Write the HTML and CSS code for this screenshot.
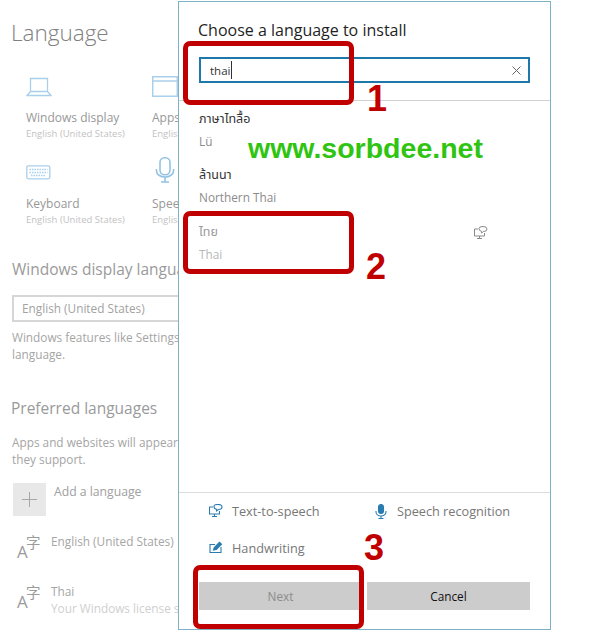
FILE: index.html
```html
<!DOCTYPE html>
<html lang="en">
<head>
<meta charset="utf-8">
<title>Language</title>
<link rel="stylesheet" href="styles.css">
</head>
<body>
<main class="page">
  <h1 class="page-title">Language</h1>
  <section class="tiles">
    <div class="tile">
      <svg class="tile-icon" width="26" height="20" viewBox="0 0 26 20"><path d="M4.500 1.500h17v13h-17zM1 18.500h24l-3.500-4h-17z"/></svg>
      <div class="tile-label">Windows display</div>
      <div class="tile-sub">English (United States)</div>
    </div>
    <div class="tile">
      <svg class="tile-icon" width="26" height="21" viewBox="0 0 26 21"><path d="M.7.700h24.600v19.600H.7zM.7 5h24.600" stroke-width="1.500"/></svg>
      <div class="tile-label window-label">Apps &amp; websites</div>
      <div class="tile-sub">English (United States)</div>
    </div>
    <div class="tile">
      <svg class="tile-icon" width="26" height="20" viewBox="0 0 26 20"><rect x=".8" y="2.800" width="23" height="13" rx="1.500"/><path class="keys" d="M3.500 6.500h18M3.500 9.500h18M5 12.500h15"/></svg>
      <div class="tile-label">Keyboard</div>
      <div class="tile-sub">English (United States)</div>
    </div>
    <div class="tile">
      <svg class="tile-icon tall" width="26" height="26" viewBox="0 0 26 26"><rect x="8" y=".8" width="10" height="17" rx="4.500"/><path d="M4.500 12v2a8.500 6 0 0 0 17 0v-2M13 20v5M9 25h8"/></svg>
      <div class="tile-label">Speech</div>
      <div class="tile-sub">English (United States)</div>
    </div>
  </section>

  <h2 class="section-title display-title">Windows display language</h2>
  <div class="select">English (United States)</div>
  <p class="note">Windows features like Settings and File Explorer will appear in this<br>language.</p>

  <h2 class="section-title preferred-title">Preferred languages</h2>
  <p class="note">Apps and websites will appear in the first language in the list that<br>they support.</p>

  <div class="add-row">
    <div class="add-box"><svg width="15" height="15" viewBox="0 0 15 15"><path d="M7.500 0v15M0 7.500h15"/></svg></div>
    <div class="add-label">Add a language</div>
  </div>
  <div class="lang-row first">
    <div class="lang-glyph"><span class="glyph-a">A</span><span class="glyph-zi">字</span></div>
    <div class="lang-text">
      <div>English (United States)</div>
    </div>
  </div>
  <div class="lang-row">
    <div class="lang-glyph"><span class="glyph-a">A</span><span class="glyph-zi">字</span></div>
    <div class="lang-text">
      <div>Thai</div>
      <div class="lang-sub">Your Windows license supports only one display language.</div>
    </div>
  </div>
</main>

<aside class="dialog">
  <div class="dialog-head">
    <h2 class="dialog-title">Choose a language to install</h2>
    <div class="search">
      <span class="search-text">thai</span><span class="caret"></span>
      <svg class="search-x" width="9" height="9" viewBox="0 0 9 9"><path d="M.5.500l8 8M8.500.500l-8 8"/></svg>
    </div>
  </div>
  <div class="results">
    <div class="result">
      <div class="native">ภาษาไทลื้อ</div>
      <div class="latin">Lü</div>
    </div>
    <div class="result">
      <div class="native">ล้านนา</div>
      <div class="latin">Northern Thai</div>
    </div>
    <div class="result selected">
      <div class="result-text">
        <div class="native">ไทย</div>
        <div class="latin">Thai</div>
      </div>
      <svg class="tts-mini" width="14" height="13" viewBox="0 0 14 13"><path d="M4 3H.5v7h10V7M5.500 10v2M3 12.500h5"/><path d="M5 2.500Q5 .5 9 .5t4 2.500-3.500 2.500L7.500 7V5.300Q5 5 5 2.500z"/></svg>
    </div>
  </div>
  <div class="features">
    <div class="feature">
      <svg width="14" height="13" viewBox="0 0 14 13"><path d="M4 3H.5v7h10V7M5.500 10v2M3 12.500h5"/><path d="M5 2.500Q5 .5 9 .5t4 2.500-3.500 2.500L7.500 7V5.300Q5 5 5 2.500z"/></svg>
      <span>Text-to-speech</span>
    </div>
    <div class="feature">
      <svg width="14" height="15" viewBox="0 0 14 15"><rect x="4.500" y=".5" width="5" height="9" rx="2.500" class="solid"/><path d="M2 7v1a5 4 0 0 0 10 0V7M7 12v2.500M4.500 14.500h5"/></svg>
      <span>Speech recognition</span>
    </div>
    <div class="feature">
      <svg width="14" height="13" viewBox="0 0 14 13"><path d="M6 3.500H1v8h11V6"/><path class="solid" d="M4.500 9l.8-2.500L10.500 1.300l2 2L7.300 8.400z"/></svg>
      <span>Handwriting</span>
    </div>
  </div>
  <div class="actions">
    <button class="btn disabled" type="button">Next</button>
    <button class="btn" type="button">Cancel</button>
  </div>
</aside>

<div class="mark box-1"></div>
<div class="mark box-2"></div>
<div class="mark box-3"></div>
<div class="num num-1">1</div>
<div class="num num-2">2</div>
<div class="num num-3">3</div>
<div class="watermark">www.sorbdee.net</div>
</body>
</html>
```

FILE: styles.css
```css
* { box-sizing: border-box; }
html, body { margin: 0; padding: 0; }
body {
  width: 600px;
  height: 634px;
  position: relative;
  overflow: hidden;
  background: #fff;
  font-family: "Open Sans", "Noto Sans", "Noto Sans Thai", "DejaVu Sans", sans-serif;
  color: #8c8c8c;
}

/* background settings page */
.page { height: 634px; padding: 17px 0 0 12px; overflow: hidden; white-space: nowrap; }
.page-title { margin: 0 0 0 -1px; font-size: 22.500px; line-height: 31px; font-weight: 300; color: #808080; }
.tiles { display: grid; grid-template-columns: 126px 126px; grid-auto-rows: 86px; margin: 29px 0 0 14px; }
.tile { display: flex; flex-direction: column; }
.tile-icon { height: 20px; flex: none; display: block; fill: none; stroke: #a9cfea; stroke-width: 1.300; }
.tile-icon.tall { height: 26px; margin-top: -6px; stroke: #93c2e4; stroke-width: 1.600; }
.tile-icon .keys { stroke-dasharray: 1.500 1; stroke-width: 1.400; }
.tile:nth-child(2) .tile-icon { height: 21px; margin: -1px 0 0; stroke-width: 1.500; }
.tile-label { margin-top: 12px; font-size: 12px; line-height: 17px; color: #989898; }
.tile-sub { font-size: 9.500px; line-height: 16px; color: #c2c2c2; }
.section-title { margin: 0; font-size: 15.500px; line-height: 22px; font-weight: 400; color: #9a9a9a; }
.display-title { margin-top: 9px; }
.select { width: 300px; height: 27px; margin-top: 15px; padding-left: 8px; border: 2px solid #d6d6d6; font-size: 11.800px; line-height: 23px; color: #a2a2a2; }
.note { margin: 7px 0 0; font-size: 11.800px; line-height: 17px; color: #a5a5a5; }
.preferred-title { margin: 34px 0 0 -1px; }
.preferred-title + .note { margin-top: 15px; }
.add-row { display: flex; gap: 8px; margin: 15px 0 0 1px; }
.add-box { width: 33px; height: 33px; display: flex; align-items: center; justify-content: center; background: #e8e8e8; }
.add-box svg { fill: none; stroke: #a8a8a8; }
.add-label { font-size: 12.200px; line-height: 17px; color: #a0a0a0; }
.lang-row { display: flex; margin-top: 16px; height: 34px; }
.lang-row.first { margin-top: 17px; }
.lang-glyph { width: 39px; height: 28px; position: relative; flex: none; color: #9b9b9b; }
.glyph-a { position: absolute; left: 5px; top: 10px; font-size: 17px; line-height: 18px; }
.glyph-zi { position: absolute; left: 14px; top: 1px; font-family: "Noto Sans CJK SC", sans-serif; font-size: 14.500px; line-height: 16px; }
.lang-text { font-size: 11.800px; line-height: 17px; color: #a5a5a5; }
.lang-sub { color: #cfcfcf; }

/* dialog over the page */
.dialog {
  position: absolute; left: 178px; top: 1px; width: 373px; height: 629px;
  display: flex; flex-direction: column;
  background: #fff; border: 1px solid #7db1c6;
  color: #222;
}
.dialog-head { height: 99px; padding: 16px 20px 0 19px; border-bottom: 1px solid #d2d2d2; }
.dialog-title { margin: 0; font-size: 16px; line-height: 25px; font-weight: 400; color: #1f1f1f; }
.search { height: 26px; margin: 14px 0 0 1px; display: flex; align-items: center; padding: 0 7px 0 9px; border: 2px solid #1f78ab; font-size: 11.500px; color: #333; }
.caret { width: 1px; height: 18px; margin-left: 1px; background: #333; }
.search-x { margin-left: auto; fill: none; stroke: #666; }
.results { flex: 1; padding-top: 8px; }
.result { height: 56px; padding-left: 20px; }
.result.selected { display: flex; justify-content: space-between; padding-right: 62px; margin-top: 1px; }
.native { height: 20px; overflow: visible; font-size: 12.500px; line-height: 20px; color: #333; }
.latin { margin-top: 2px; font-size: 11.800px; line-height: 20px; color: #8b8b8b; }
.selected .native { color: #9a9a9a; }
.selected .latin { color: #b8b8b8; }
.tts-mini { margin-top: 4px; fill: none; stroke: #8a8a8a; stroke-width: 1; }
.features { height: 73px; flex: none; border-top: 1px solid #dcdcdc; padding: 8px 0 0 30px; display: grid; grid-template-columns: 165px 1fr; grid-auto-rows: 37px; }
.feature { display: flex; align-items: flex-start; gap: 9px; font-size: 12.700px; line-height: 20px; color: #777; }
.feature svg { margin-top: 3px; flex: none; fill: none; stroke: #2a7cb0; stroke-width: 1.100; }
.feature .solid { fill: #2a7cb0; }
.actions { display: flex; gap: 5px; height: 64px; padding: 17px 20px 0; flex: none; }
.btn { flex: 1; height: 28px; padding: 0; border: 0; background: #cccccc; font: inherit; font-size: 11.800px; color: #111; }
.btn.disabled { color: #8b8b8b; }

/* annotations */
.mark { position: absolute; border: 5px solid #c00000; border-radius: 7px; }
.box-1 { left: 183px; top: 41px; width: 171px; height: 64px; }
.box-2 { left: 183px; top: 211px; width: 171px; height: 63px; }
.box-3 { left: 193px; top: 565px; width: 171px; height: 64px; }
.num { position: absolute; font-family: "Liberation Sans", sans-serif; font-weight: 700; font-size: 36px; line-height: 36px; color: #c00000; }
.num-1 { left: 367px; top: 81px; }
.num-2 { left: 366px; top: 249px; }
.num-3 { left: 364px; top: 530px; }
.watermark { position: absolute; left: 248px; top: 132px; font-family: "Liberation Sans", sans-serif; font-weight: 700; font-size: 28.500px; line-height: 33px; color: #2fc412; white-space: nowrap; }
```
